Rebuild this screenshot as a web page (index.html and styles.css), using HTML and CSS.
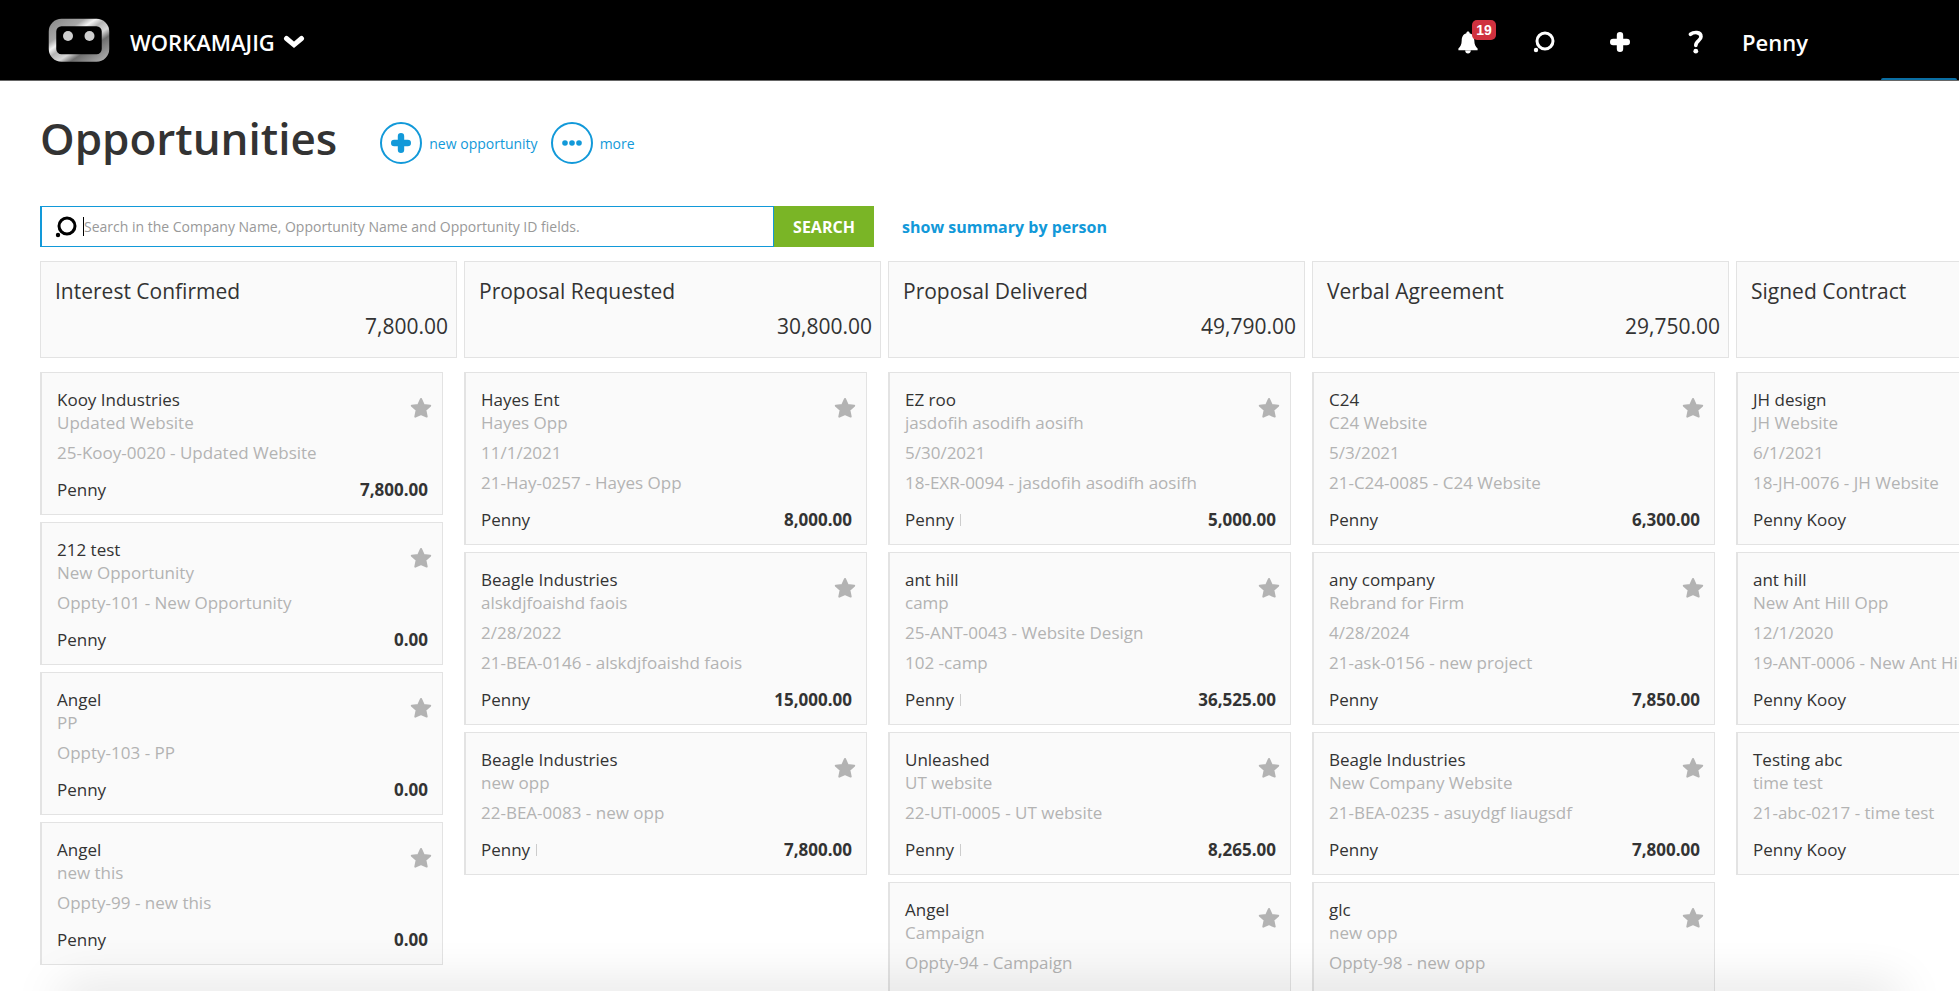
FILE: index.html
```html
<!DOCTYPE html>
<html lang="en">

<head>
    <meta charset="UTF-8">
    <meta name="viewport" content="width=device-width, initial-scale=1.0">
    <title>Opportunities</title>
    <link rel="stylesheet" href="styles.css">
</head>

<body>
    <!-- shared icons -->
    <svg class="symbols" aria-hidden="true">
        <symbol id="star" viewBox="0 0 22 22">
            <path d="M11 2 L13.7 8 L20.2 8.7 L15.4 13.1 L16.7 19.6 L11 17.2 L5.3 19.6 L6.6 13.1 L1.8 8.7 L8.3 8 Z" fill="currentColor" stroke="currentColor" stroke-width="2" stroke-linejoin="round" />
        </symbol>
        <symbol id="search" viewBox="0 0 22 22">
            <circle cx="12" cy="10" r="8" fill="none" stroke="currentColor" stroke-width="3" />
            <circle cx="3" cy="19" r="2.2" fill="currentColor" />
        </symbol>
        <symbol id="plus" viewBox="0 0 20 20">
            <path d="M10 3.2 V16.8 M3.2 10 H16.8" fill="none" stroke="currentColor" stroke-width="6.4" stroke-linecap="round" />
        </symbol>
    </svg>

    <header class="topbar">
        <a class="logo" href="#" aria-label="Home">
            <svg width="62" height="46" viewBox="0 0 62 46">
                <defs>
                    <linearGradient id="metal" x1="0" y1="0" x2="1" y2="1">
                        <stop offset="0" stop-color="#8f8f8f" />
                        <stop offset="0.25" stop-color="#a8a8a8" />
                        <stop offset="0.36" stop-color="#f2f2f2" />
                        <stop offset="0.46" stop-color="#b4b4b4" />
                        <stop offset="0.6" stop-color="#d8d8d8" />
                        <stop offset="0.72" stop-color="#6e6e6e" />
                        <stop offset="1" stop-color="#a6a6a6" />
                    </linearGradient>
                </defs>
                <rect x="4.5" y="5.5" width="53" height="35.5" rx="9" fill="#000" stroke="url(#metal)" stroke-width="7.5" />
                <circle cx="20" cy="19" r="5" fill="#cfcfcf" />
                <circle cx="41.5" cy="19" r="5" fill="#cfcfcf" />
            </svg>
        </a>
        <button class="company">
            WORKAMAJIG
            <svg width="22" height="14" viewBox="0 0 22 14">
                <path d="M3.5 3.5 L11 9.8 L18.5 3.5" fill="none" stroke="currentColor" stroke-width="5" stroke-linecap="round" />
            </svg>
        </button>
        <nav class="tools">
            <button class="tool" aria-label="Notifications">
                <svg width="20" height="23" viewBox="0 0 20 23">
                    <path d="M10 0.5 C11 0.5 11.6 1.2 11.6 2.2 C15 3 16.2 6 16.3 9.5 C16.4 13.5 17.5 15.5 19.6 17.5 V19.3 H0.4 V17.5 C2.5 15.5 3.6 13.5 3.7 9.5 C3.8 6 5 3 8.4 2.2 C8.4 1.2 9 0.5 10 0.5 Z M7.2 19.5 H12.8 C12.8 21.5 11.6 22.5 10 22.5 C8.4 22.5 7.2 21.5 7.2 19.5 Z" fill="currentColor" />
                </svg>
                <span class="badge">19</span>
            </button>
            <button class="tool" aria-label="Search"><svg width="22" height="22"><use href="#search" /></svg></button>
            <button class="tool" aria-label="Add"><svg width="20" height="20"><use href="#plus" /></svg></button>
            <button class="tool" aria-label="Help">
                <svg width="16" height="24" viewBox="0 0 16 24">
                    <path d="M2.5 4.3 C5.5 2 13 1.2 13 6.8 C13 10.8 7.8 10.5 7.8 15.5" fill="none" stroke="currentColor" stroke-width="3.6" stroke-linecap="round" />
                    <circle cx="7.8" cy="21.2" r="2.4" fill="currentColor" />
                </svg>
            </button>
            <a class="user" href="#">Penny</a>
            <span class="tab-mark"></span>
        </nav>
    </header>

    <main class="page">
        <div class="heading">
            <h1>Opportunities</h1>
            <button class="action">
                <span class="circle"><svg width="20" height="20"><use href="#plus" /></svg></span>
                new opportunity
            </button>
            <button class="action">
                <span class="circle">
                    <svg width="20" height="6" viewBox="0 0 20 6">
                        <circle cx="3" cy="3" r="2.8" fill="currentColor" />
                        <circle cx="10" cy="3" r="2.8" fill="currentColor" />
                        <circle cx="17" cy="3" r="2.8" fill="currentColor" />
                    </svg>
                </span>
                more
            </button>
        </div>

        <form class="search-row">
            <label class="search-box">
                <svg width="22" height="22"><use href="#search" /></svg>
                <span class="caret"></span>
                <input type="text" aria-label="Search opportunities" placeholder="Search in the Company Name, Opportunity Name and Opportunity ID fields.">
            </label>
            <button class="btn-search" type="button">SEARCH</button>
            <a class="summary-link" href="#">show summary by person</a>
        </form>

        <div class="board">
            <section class="column">
                <div class="column-head">
                    <h2>Interest Confirmed</h2>
                    <p class="total">7,800.00</p>
                </div>
                <article class="card">
                    <div class="card-top">
                        <div>
                            <h3>Kooy Industries</h3>
                            <p>Updated Website</p>
                        </div>
                        <svg class="star"><use href="#star" /></svg>
                    </div>
                    <p class="detail">25-Kooy-0020 - Updated Website</p>
                    <div class="card-foot"><span>Penny</span><b>7,800.00</b></div>
                </article>
                <article class="card">
                    <div class="card-top">
                        <div>
                            <h3>212 test</h3>
                            <p>New Opportunity</p>
                        </div>
                        <svg class="star"><use href="#star" /></svg>
                    </div>
                    <p class="detail">Oppty-101 - New Opportunity</p>
                    <div class="card-foot"><span>Penny</span><b>0.00</b></div>
                </article>
                <article class="card">
                    <div class="card-top">
                        <div>
                            <h3>Angel</h3>
                            <p>PP</p>
                        </div>
                        <svg class="star"><use href="#star" /></svg>
                    </div>
                    <p class="detail">Oppty-103 - PP</p>
                    <div class="card-foot"><span>Penny</span><b>0.00</b></div>
                </article>
                <article class="card">
                    <div class="card-top">
                        <div>
                            <h3>Angel</h3>
                            <p>new this</p>
                        </div>
                        <svg class="star"><use href="#star" /></svg>
                    </div>
                    <p class="detail">Oppty-99 - new this</p>
                    <div class="card-foot"><span>Penny</span><b>0.00</b></div>
                </article>
            </section>

            <section class="column">
                <div class="column-head">
                    <h2>Proposal Requested</h2>
                    <p class="total">30,800.00</p>
                </div>
                <article class="card">
                    <div class="card-top">
                        <div>
                            <h3>Hayes Ent</h3>
                            <p>Hayes Opp</p>
                        </div>
                        <svg class="star"><use href="#star" /></svg>
                    </div>
                    <p class="detail">11/1/2021</p>
                    <p class="detail">21-Hay-0257 - Hayes Opp</p>
                    <div class="card-foot"><span>Penny</span><b>8,000.00</b></div>
                </article>
                <article class="card">
                    <div class="card-top">
                        <div>
                            <h3>Beagle Industries</h3>
                            <p>alskdjfoaishd faois</p>
                        </div>
                        <svg class="star"><use href="#star" /></svg>
                    </div>
                    <p class="detail">2/28/2022</p>
                    <p class="detail">21-BEA-0146 - alskdjfoaishd faois</p>
                    <div class="card-foot"><span>Penny</span><b>15,000.00</b></div>
                </article>
                <article class="card">
                    <div class="card-top">
                        <div>
                            <h3>Beagle Industries</h3>
                            <p>new opp</p>
                        </div>
                        <svg class="star"><use href="#star" /></svg>
                    </div>
                    <p class="detail">22-BEA-0083 - new opp</p>
                    <div class="card-foot"><span class="divided">Penny</span><b>7,800.00</b></div>
                </article>
            </section>

            <section class="column">
                <div class="column-head">
                    <h2>Proposal Delivered</h2>
                    <p class="total">49,790.00</p>
                </div>
                <article class="card">
                    <div class="card-top">
                        <div>
                            <h3>EZ roo</h3>
                            <p>jasdofih asodifh aosifh</p>
                        </div>
                        <svg class="star"><use href="#star" /></svg>
                    </div>
                    <p class="detail">5/30/2021</p>
                    <p class="detail">18-EXR-0094 - jasdofih asodifh aosifh</p>
                    <div class="card-foot"><span class="divided">Penny</span><b>5,000.00</b></div>
                </article>
                <article class="card">
                    <div class="card-top">
                        <div>
                            <h3>ant hill</h3>
                            <p>camp</p>
                        </div>
                        <svg class="star"><use href="#star" /></svg>
                    </div>
                    <p class="detail">25-ANT-0043 - Website Design</p>
                    <p class="detail">102 -camp</p>
                    <div class="card-foot"><span class="divided">Penny</span><b>36,525.00</b></div>
                </article>
                <article class="card">
                    <div class="card-top">
                        <div>
                            <h3>Unleashed</h3>
                            <p>UT website</p>
                        </div>
                        <svg class="star"><use href="#star" /></svg>
                    </div>
                    <p class="detail">22-UTI-0005 - UT website</p>
                    <div class="card-foot"><span class="divided">Penny</span><b>8,265.00</b></div>
                </article>
                <article class="card">
                    <div class="card-top">
                        <div>
                            <h3>Angel</h3>
                            <p>Campaign</p>
                        </div>
                        <svg class="star"><use href="#star" /></svg>
                    </div>
                    <p class="detail">Oppty-94 - Campaign</p>
                </article>
            </section>

            <section class="column">
                <div class="column-head">
                    <h2>Verbal Agreement</h2>
                    <p class="total">29,750.00</p>
                </div>
                <article class="card">
                    <div class="card-top">
                        <div>
                            <h3>C24</h3>
                            <p>C24 Website</p>
                        </div>
                        <svg class="star"><use href="#star" /></svg>
                    </div>
                    <p class="detail">5/3/2021</p>
                    <p class="detail">21-C24-0085 - C24 Website</p>
                    <div class="card-foot"><span>Penny</span><b>6,300.00</b></div>
                </article>
                <article class="card">
                    <div class="card-top">
                        <div>
                            <h3>any company</h3>
                            <p>Rebrand for Firm</p>
                        </div>
                        <svg class="star"><use href="#star" /></svg>
                    </div>
                    <p class="detail">4/28/2024</p>
                    <p class="detail">21-ask-0156 - new project</p>
                    <div class="card-foot"><span>Penny</span><b>7,850.00</b></div>
                </article>
                <article class="card">
                    <div class="card-top">
                        <div>
                            <h3>Beagle Industries</h3>
                            <p>New Company Website</p>
                        </div>
                        <svg class="star"><use href="#star" /></svg>
                    </div>
                    <p class="detail">21-BEA-0235 - asuydgf liaugsdf</p>
                    <div class="card-foot"><span>Penny</span><b>7,800.00</b></div>
                </article>
                <article class="card">
                    <div class="card-top">
                        <div>
                            <h3>glc</h3>
                            <p>new opp</p>
                        </div>
                        <svg class="star"><use href="#star" /></svg>
                    </div>
                    <p class="detail">Oppty-98 - new opp</p>
                </article>
            </section>

            <section class="column">
                <div class="column-head">
                    <h2>Signed Contract</h2>
                </div>
                <article class="card">
                    <div class="card-top">
                        <div>
                            <h3>JH design</h3>
                            <p>JH Website</p>
                        </div>
                    </div>
                    <p class="detail">6/1/2021</p>
                    <p class="detail">18-JH-0076 - JH Website</p>
                    <div class="card-foot"><span>Penny Kooy</span></div>
                </article>
                <article class="card">
                    <div class="card-top">
                        <div>
                            <h3>ant hill</h3>
                            <p>New Ant Hill Opp</p>
                        </div>
                    </div>
                    <p class="detail">12/1/2020</p>
                    <p class="detail">19-ANT-0006 - New Ant Hill Opp</p>
                    <div class="card-foot"><span>Penny Kooy</span></div>
                </article>
                <article class="card">
                    <div class="card-top">
                        <div>
                            <h3>Testing abc</h3>
                            <p>time test</p>
                        </div>
                    </div>
                    <p class="detail">21-abc-0217 - time test</p>
                    <div class="card-foot"><span>Penny Kooy</span></div>
                </article>
            </section>
        </div>
    </main>
    <div class="bottom-shadow"></div>
</body>

</html>
```
FILE: styles.css
```css
* {
    box-sizing: border-box;
}

body {
    font-family: "Open Sans", "Noto Sans", sans-serif;
    font-size: 16px;
    margin: 0;
    height: 100vh;
    display: flex;
    flex-direction: column;
    overflow: hidden;
    background-color: #fff;
    color: #333;
}

h1,
h2,
h3,
p {
    margin: 0;
    font-weight: 400;
}

button,
input {
    font-family: inherit;
    border: none;
    background: none;
    padding: 0;
}

button {
    cursor: pointer;
}

a {
    text-decoration: none;
}

svg {
    display: block;
    flex: none;
}

.symbols {
    position: absolute;
    width: 0;
    height: 0;
}

/* top bar */
.topbar {
    display: flex;
    align-items: center;
    flex: none;
    height: 81px;
    padding-left: 48px;
    background-color: #000;
    border-bottom: 1px solid #666;
    color: #fff;
}

.company {
    display: flex;
    align-items: center;
    gap: 8px;
    margin-left: 20px;
    padding-top: 3px;
    color: #fff;
    font-size: 22px;
    font-weight: 600;
}

.tools {
    display: flex;
    align-items: center;
    height: 100%;
    margin-left: auto;
    padding-top: 4px;
}

.tool {
    position: relative;
    display: flex;
    justify-content: center;
    align-items: center;
    width: 76px;
    height: 40px;
    color: #fff;
}

.badge {
    position: absolute;
    top: -2px;
    left: 42px;
    width: 24px;
    height: 20px;
    border-radius: 5px;
    background-color: #d0313f;
    font-family: "Liberation Sans", Arial, sans-serif;
    font-size: 14px;
    font-weight: 700;
    line-height: 20px;
}

.user {
    width: 147px;
    padding-left: 8px;
    color: #fff;
    font-size: 22px;
    font-weight: 600;
    line-height: 30px;
}

.tab-mark {
    align-self: flex-end;
    width: 76px;
    height: 2px;
    margin-right: 2px;
    border-radius: 2px 2px 0 0;
    background-color: #0b6fa4;
}

/* heading */
.page {
    flex: 1;
    min-height: 0;
    padding: 24px 0 0 40px;
    overflow: hidden;
}

.heading {
    display: flex;
    align-items: center;
    height: 76px;
}

.heading h1 {
    margin-right: 43px;
    padding-bottom: 10px;
    font-size: 44px;
    font-weight: 600;
    line-height: 60px;
}

.action {
    display: flex;
    align-items: center;
    gap: 7px;
    margin-right: 13px;
    color: #1299d9;
    font-size: 14px;
}

.circle {
    display: flex;
    justify-content: center;
    align-items: center;
    width: 42px;
    height: 42px;
    border: 2px solid #1299d9;
    border-radius: 50%;
}

/* search */
.search-row {
    display: flex;
    align-items: center;
    margin-top: 25px;
}

.search-box {
    display: flex;
    align-items: center;
    width: 734px;
    height: 41px;
    padding-left: 13px;
    border: 1px solid #1299d9;
    border-left-width: 2px;
    color: #000;
}

.caret {
    width: 1px;
    height: 19px;
    margin-left: 6px;
    background-color: #000;
}

.search-box input {
    flex: 1;
    min-width: 0;
    height: 100%;
    font-size: 14px;
    outline: none;
}

.search-box input::placeholder {
    color: #999;
}

.btn-search {
    width: 100px;
    height: 41px;
    background-color: #7ab526;
    color: #fff;
    font-size: 16px;
    font-weight: 700;
}

.summary-link {
    margin-left: 28px;
    color: #1299d9;
    font-size: 16px;
    font-weight: 700;
}

/* board */
.board {
    display: flex;
    gap: 7px;
    margin-top: 14px;
}

.column {
    display: flex;
    flex-direction: column;
    flex: none;
    gap: 7px;
    width: 417px;
}

.column-head {
    height: 97px;
    margin-bottom: 7px;
    padding: 12px 8px 0 14px;
    background-color: #fafafa;
    border: 1px solid #e3e3e3;
}

.column-head h2,
.total {
    font-size: 21px;
    line-height: 35px;
}

.total {
    text-align: right;
}

.card {
    width: 403px;
    min-height: 143px;
    padding: 15px 10px 13px 15px;
    background-color: #fafafa;
    border: 1px solid #e3e3e3;
    border-left-width: 2px;
    font-size: 17px;
    line-height: 23px;
    color: #b3b3b3;
}

.card h3 {
    font-size: 17px;
    color: #333;
}

.card-top {
    display: flex;
    justify-content: space-between;
}

.star {
    width: 22px;
    height: 22px;
    margin-top: 9px;
}

.detail {
    margin-top: 7px;
}

.card-foot {
    display: flex;
    justify-content: space-between;
    align-items: center;
    margin-top: 14px;
    padding-right: 4px;
    color: #333;
}

.divided {
    display: flex;
    align-items: center;
    gap: 6px;
}

.divided::after {
    content: "";
    width: 1px;
    height: 12px;
    background-color: #ccc;
}

.bottom-shadow {
    position: fixed;
    right: 60px;
    bottom: -20px;
    left: 60px;
    height: 20px;
    box-shadow: 0 0 50px rgba(0, 0, 0, 0.2);
    pointer-events: none;
}
```
